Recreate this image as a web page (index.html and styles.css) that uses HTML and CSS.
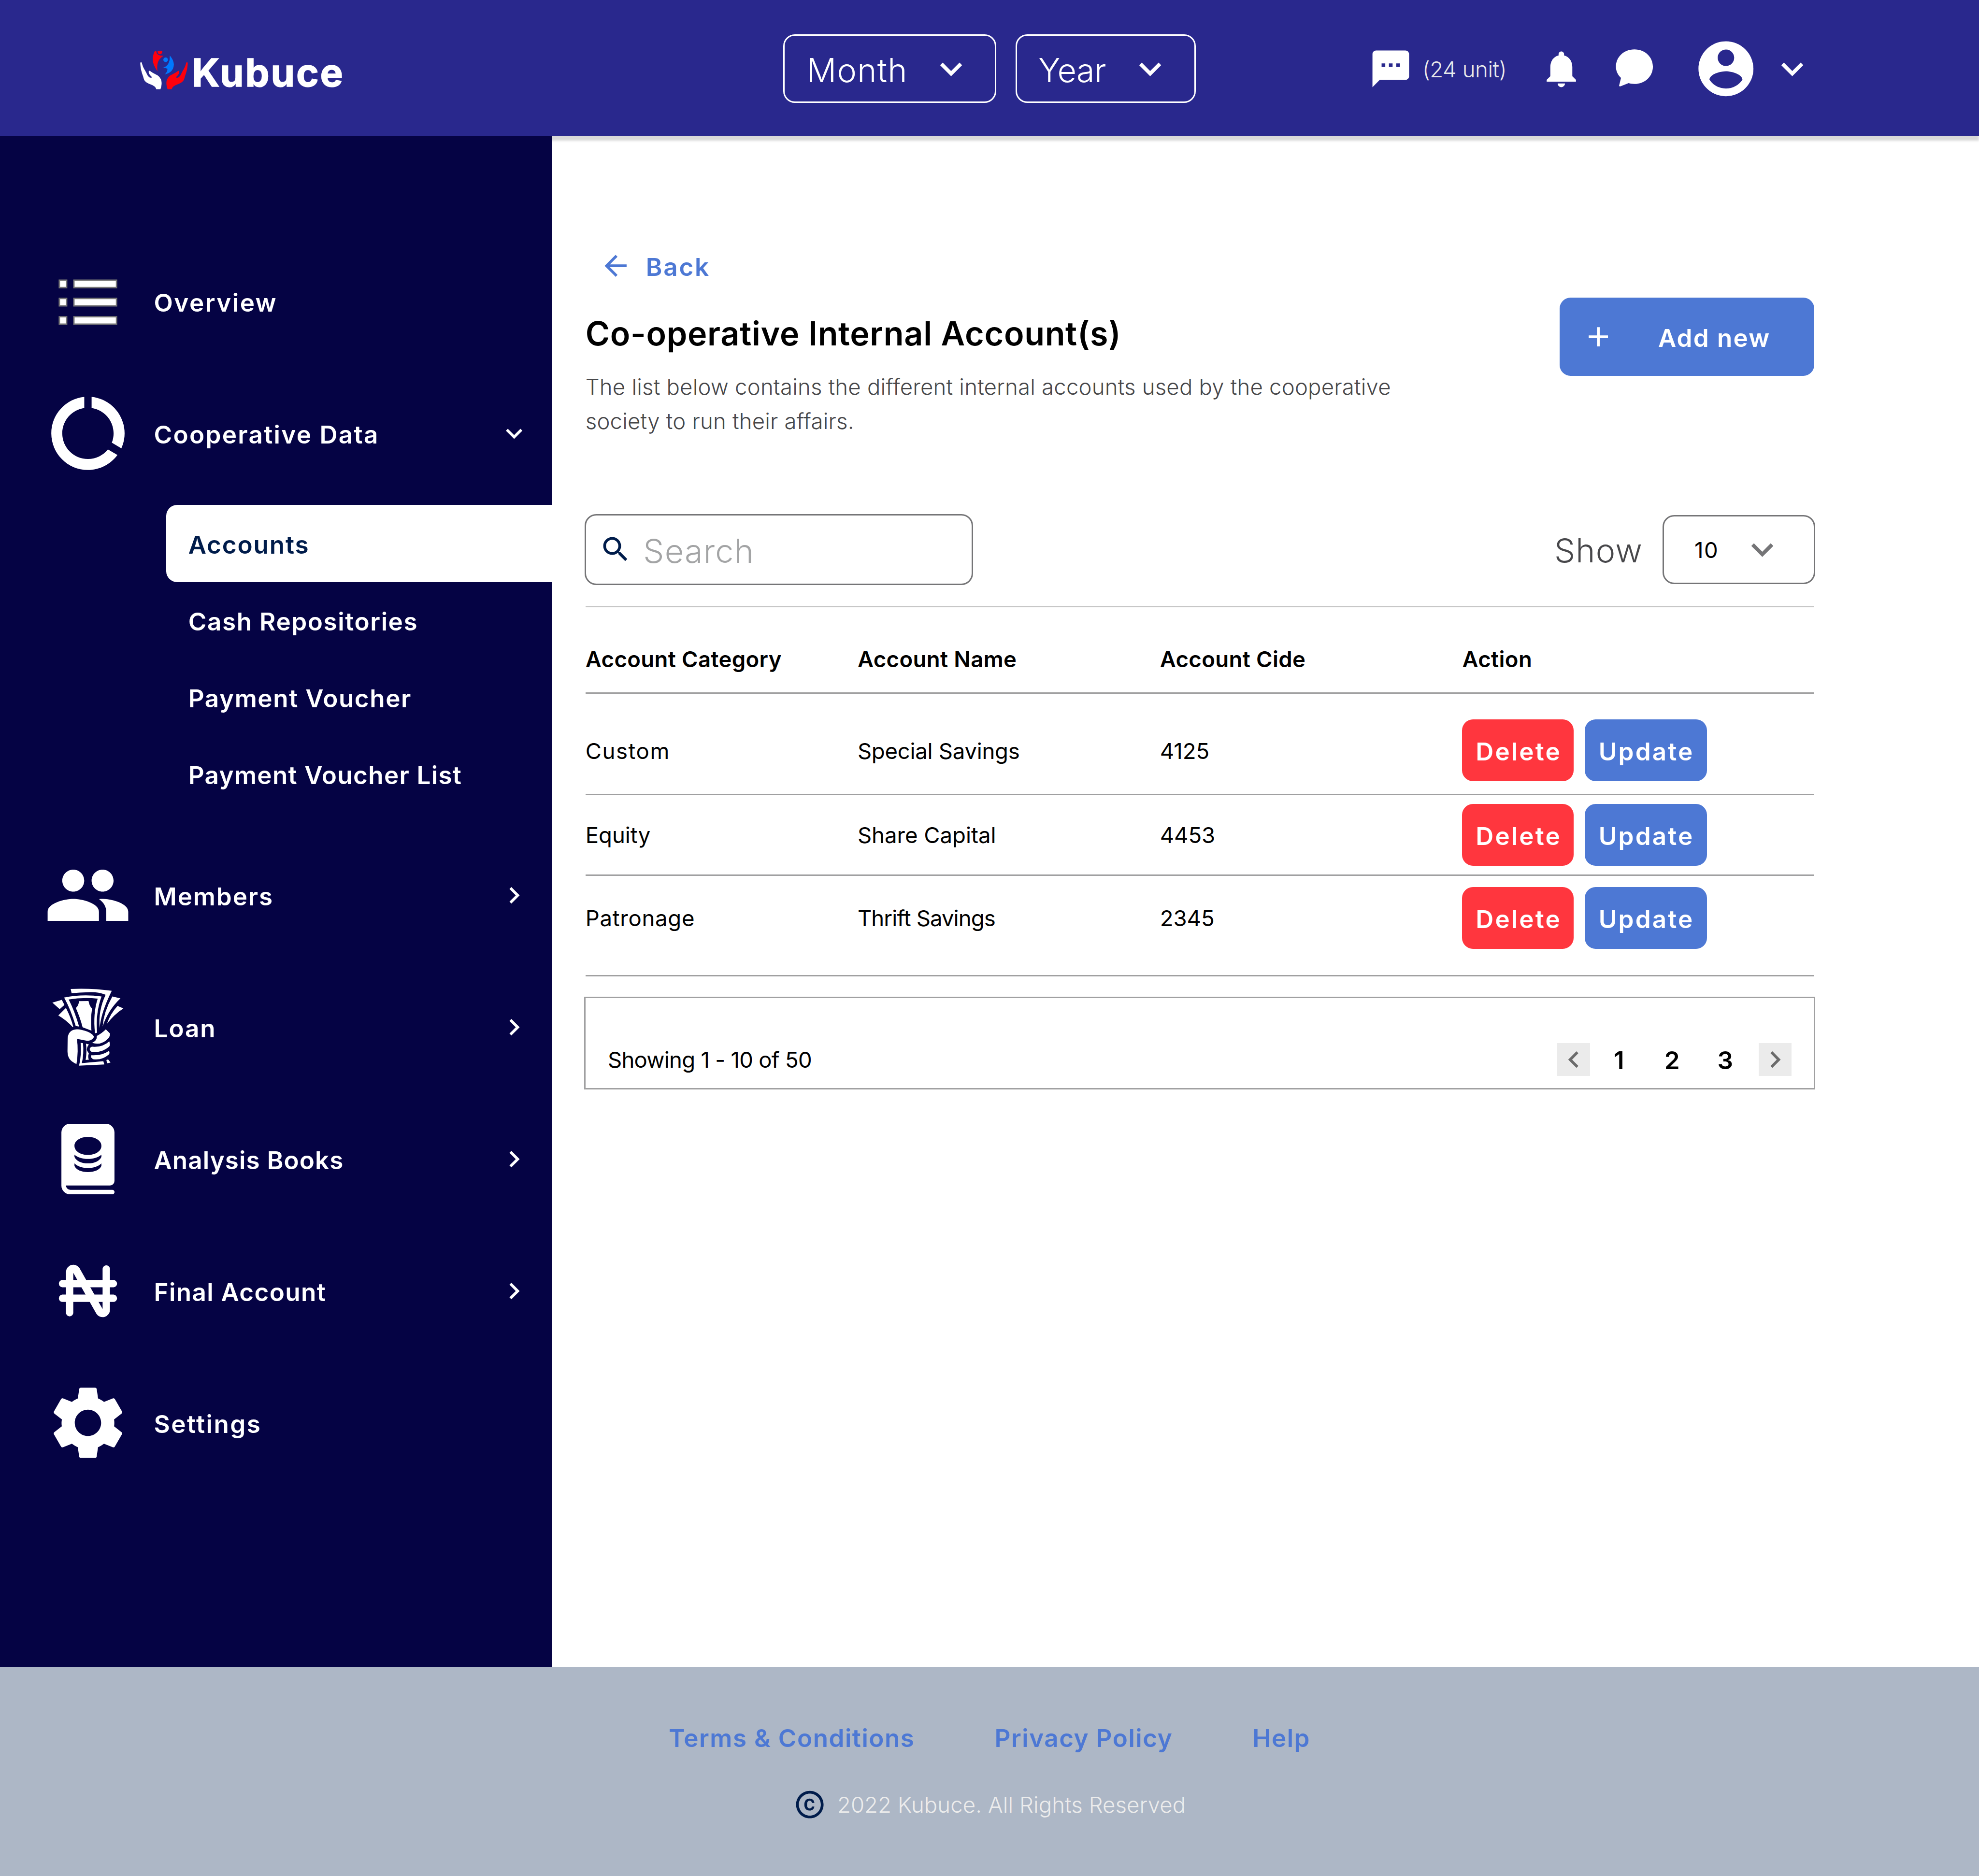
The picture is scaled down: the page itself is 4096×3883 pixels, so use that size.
FILE: index.html
```html
<!DOCTYPE html>
<html lang="en">
<head>
<meta charset="utf-8">
<title>Kubuce - Internal Accounts</title>
<link rel="stylesheet" href="styles.css">
</head>
<body>
<svg class="sprite" aria-hidden="true">
  <symbol id="i-down" viewBox="0 0 24 24"><path d="M7.41 8.59 12 13.17l4.59-4.58L18 10l-6 6-6-6z"/></symbol>
  <symbol id="i-right" viewBox="0 0 24 24"><path d="M10 6 8.59 7.41 13.17 12l-4.58 4.59L10 18l6-6z"/></symbol>
  <symbol id="i-left" viewBox="0 0 24 24"><path d="M15.41 7.41 14 6l-6 6 6 6 1.41-1.41L10.83 12z"/></symbol>
</svg>

<header class="header">
  <div class="logo">
    <svg class="logo-mark" viewBox="78 93 313 252">
      <path fill="#fff" d="M79 174C80 166 88 166 90 175C97 205 112 222 120 240C128 260 138 270 150 270C157 268 155 264 148 258C138 248 133 238 134 230C136 222 142 223 150 231C162 241 178 246 190 253C212 268 219 285 219 306C219 322 215 335 211 345H184C180 330 168 322 145 313C112 300 104 290 98 262C88 235 80 210 79 174Z"/>
      <path fill="#ff000c" transform="translate(469 0) scale(-1 1)" d="M79 174C80 166 88 166 90 175C97 205 112 222 120 240C128 260 138 270 150 270C157 268 155 264 148 258C138 248 133 238 134 230C136 222 142 223 150 231C162 241 178 246 190 253C212 268 219 285 219 306C219 322 215 335 211 345H184C180 330 168 322 145 313C112 300 104 290 98 262C88 235 80 210 79 174Z"/>
      <path fill="#ff000c" d="M176 93H184C183 115 200 127 232 126C200 146 185 170 192 228C168 192 160 170 161 145C162 122 168 105 176 93ZM193 93H223C225 108 217 116 208 116C199 116 191 108 193 93Z"/>
      <path fill="#0078ff" d="M272 124C290 145 299 165 299 185C297 225 270 242 240 248C250 238 257 226 257 212C248 206 238 204 224 206C255 197 275 175 272 124ZM230 152a15 15 0 1 0 30 0a15 15 0 1 0-30 0Z"/>
    </svg>
    <span class="wordmark">Kubuce</span>
  </div>
  <div class="select month"><span class="t">Month</span><svg class="i32"><use href="#i-down"/></svg></div>
  <div class="select year"><span class="t">Year</span><svg class="i32"><use href="#i-down"/></svg></div>
  <div class="tools">
    <svg class="i32" viewBox="0 0 24 24"><path d="M20 2H4c-1.1 0-1.99.9-1.99 2L2 22l4-4h14c1.1 0 2-.9 2-2V4c0-1.1-.9-2-2-2zM9 11H7V9h2v2zm4 0h-2V9h2v2zm4 0h-2V9h2v2z"/></svg>
    <span class="t units">(24 unit)</span>
    <svg class="i32 bell" viewBox="0 0 24 24"><path d="M12 22c1.1 0 2-.9 2-2h-4c0 1.1.89 2 2 2zm6-6v-5c0-3.07-1.64-5.64-4.5-6.32V4c0-.83-.67-1.5-1.5-1.5s-1.5.67-1.5 1.5v.68C7.63 5.36 6 7.92 6 11v5l-2 2v1h16v-1l-2-2z"/></svg>
    <svg class="i32 chat" viewBox="0 0 32 32"><path d="M17.15 1.85C24.9 1.85 30.6 7.4 30.6 14.4S24.9 27 17.15 27c-1.6 0-3-.2-4.2-.6l-6 2.3c-.6.2-1-.1-.9-.7L7.4 22.6C5 20.3 3.7 17.6 3.7 14.4 3.7 7.4 9.4 1.85 17.15 1.85z"/></svg>
    <svg class="avatar" viewBox="0 0 24 24"><path d="M12 2C6.48 2 2 6.48 2 12s4.48 10 10 10 10-4.48 10-10S17.52 2 12 2zm0 3c1.66 0 3 1.34 3 3s-1.34 3-3 3-3-1.34-3-3 1.34-3 3-3zm0 14.2c-2.5 0-4.71-1.28-6-3.22.03-1.99 4-3.08 6-3.08 1.99 0 5.97 1.09 6 3.08-1.29 1.94-3.5 3.22-6 3.22z"/></svg>
    <svg class="i32"><use href="#i-down"/></svg>
  </div>
</header>

<div class="body">
  <nav class="sidebar">
    <a class="item">
      <svg class="i64" viewBox="0 0 64 64"><g fill="#fff" stroke="#777" stroke-width="1"><path d="M11.2 16.5h5.3v5.4h-5.3zM21.8 16.5h31v5.4h-31zM11.2 29.8h5.3v5.4h-5.3zM21.8 29.8h31v5.4h-31zM11.2 43.1h5.3v5.4h-5.3zM21.8 43.1h31v5.4h-31z"/></g></svg>
      <span class="t">Overview</span>
    </a>
    <a class="item">
      <svg class="i64" viewBox="0 0 24 24"><path d="M13 2.05v3.03c3.39.49 6 3.39 6 6.92 0 .9-.18 1.75-.48 2.54l2.6 1.53c.56-1.24.88-2.62.88-4.07 0-5.18-3.95-9.45-9-9.95zM12 19c-3.87 0-7-3.13-7-7 0-3.53 2.61-6.43 6-6.92V2.05c-5.06.5-9 4.76-9 9.95 0 5.52 4.47 10 9.99 10 3.31 0 6.24-1.61 8.06-4.09l-2.6-1.53C16.17 17.98 14.21 19 12 19z"/></svg>
      <span class="t cooperative">Cooperative Data</span>
      <svg class="i24 caret"><use href="#i-down"/></svg>
    </a>
    <div class="submenu">
      <a class="sub active"><span class="t">Accounts</span></a>
      <a class="sub"><span class="t">Cash Repositories</span></a>
      <a class="sub"><span class="t">Payment Voucher</span></a>
      <a class="sub voucher-list"><span class="t">Payment Voucher List</span></a>
    </div>
    <a class="item">
      <svg class="i64" viewBox="0 0 24 24"><path d="M16 11c1.66 0 2.99-1.34 2.99-3S17.66 5 16 5c-1.66 0-3 1.34-3 3s1.34 3 3 3zm-8 0c1.66 0 2.99-1.34 2.99-3S9.66 5 8 5C6.34 5 5 6.34 5 8s1.34 3 3 3zm0 2c-2.33 0-7 1.17-7 3.5V19h14v-2.5c0-2.33-4.67-3.5-7-3.5zm8 0c-.29 0-.62.02-.97.05 1.16.84 1.97 1.97 1.97 3.45V19h6v-2.5c0-2.33-4.67-3.5-7-3.5z"/></svg>
      <span class="t members">Members</span>
      <svg class="i24 caret"><use href="#i-right"/></svg>
    </a>
    <a class="item">
      <svg class="i64" viewBox="48 864 576 576">
        <path d="M223 902Q360 896 492 914Q420 1060 413 1158Q402 1045 452 940Q400 920 340 923Q280 924 229 930Z"/>
        <path d="M180 958Q300 934 425 951Q385 1060 396 1188L382 1192Q368 1060 400 965Q300 955 210 971Q250 1050 278 1148L256 1145Q225 1040 180 958Z"/>
        <path d="M277 982L340 981Q344 1010 363 1031Q352 1100 359 1175L301 1153Q285 1090 257 1027Q277 1008 277 982Z"/>
        <path d="M103 991L165 973L182 1006L151 1034Z"/>
        <path d="M192 1026L142 1075Q200 1110 236 1152L240 1150Q225 1090 192 1026Z"/>
        <path d="M496 951L549 964Q468 1040 432 1148Q440 1050 496 951Z"/>
        <path d="M530 1013L568 1029Q505 1070 460 1131Q482 1065 530 1013Z"/>
        <path d="M262 1166C305 1166 375 1192 375 1217C365 1233 352 1243 330 1241L264 1229Q275 1310 261 1394C222 1374 204 1358 202 1310L203 1225Q208 1168 262 1166Z"/>
        <path d="M453 1166L480 1193Q482 1210 470 1225Q425 1275 363 1255Q397 1240 394 1210Q430 1190 453 1166Z"/>
        <path d="M476 1245Q484 1270 474 1280Q430 1320 362 1315Q345 1305 348 1292Q355 1278 368 1280Q430 1285 476 1245Z"/>
        <path d="M474 1307Q480 1320 474 1330Q430 1370 372 1362Q352 1355 357 1336Q430 1340 474 1307Z"/>
        <path d="M288 1255L304 1257Q310 1330 296 1388L437 1375L443 1396L278 1404Q295 1330 288 1255Z"/>
        <path d="M323 1260L342 1265Q325 1290 330 1305L342 1325Q333 1345 342 1365L321 1367Q330 1310 323 1260Z"/>
        <path d="M457 1367L468 1363L484 1384L461 1389Z"/>
      </svg>
      <span class="t members">Loan</span>
      <svg class="i24 caret"><use href="#i-right"/></svg>
    </a>
    <a class="item">
      <svg class="i64" viewBox="0 0 64 64"><path fill-rule="evenodd" d="M19 6.3H45a6.3 6.3 0 0 1 6.3 6.3V48a3.2 3.2 0 0 1-3.2 3.2H16a3.2 3.2 0 0 0 3.2 3.2H49.7a1.6 1.6 0 0 1 0 3.3H19a6.3 6.3 0 0 1-6.3-6.3V12.6A6.3 6.3 0 0 1 19 6.3zM32 15.9C26.5 15.9 22.2 18.6 22.2 22.4S26.5 29 32 29S41.8 26.2 41.8 22.4S37.5 15.9 32 15.9zM22.2 28.8V30.4C23.3 33.3 27.3 35.2 32 35.2S40.7 33.3 41.8 30.4V28.8C39.6 30.8 36 31.9 32 31.9S24.4 30.8 22.2 28.8zM22.2 35.2V37C23.3 39.8 27.3 41.5 32 41.5S40.7 39.8 41.8 37V35.2C39.6 37.4 36 38.6 32 38.6S24.4 37.4 22.2 35.2z"/></svg>
      <span class="t analysis">Analysis Books</span>
      <svg class="i24 caret"><use href="#i-right"/></svg>
    </a>
    <a class="item">
      <svg class="i64" viewBox="0 0 64 64"><path d="M16 18.4a5.33 5.33 0 0 1 9.9-2.9L42.67 45.2V15.9a2.67 2.67 0 0 1 5.33 0V45.6a5.33 5.33 0 0 1-9.9 2.9L21.33 18.8V48a2.67 2.67 0 0 1-5.33 0z"/><path d="M13.33 24H50.67a2.67 2.67 0 0 1 0 5.33H13.33a2.67 2.67 0 0 1 0-5.33zM13.33 34.67H50.67a2.67 2.67 0 0 1 0 5.33H13.33a2.67 2.67 0 0 1 0-5.33z"/></svg>
      <span class="t final">Final Account</span>
      <svg class="i24 caret"><use href="#i-right"/></svg>
    </a>
    <a class="item">
      <svg class="i64" viewBox="0 0 24 24"><path d="M19.14 12.94c.04-.3.06-.61.06-.94 0-.32-.02-.64-.07-.94l2.03-1.58c.18-.14.23-.41.12-.61l-1.92-3.32c-.12-.22-.37-.29-.59-.22l-2.39.96c-.5-.38-1.03-.7-1.62-.94l-.36-2.54c-.04-.24-.24-.41-.48-.41h-3.84c-.24 0-.43.17-.47.41l-.36 2.54c-.59.24-1.13.57-1.62.94l-2.39-.96c-.22-.08-.47 0-.59.22L2.74 8.87c-.12.21-.08.47.12.61l2.03 1.58c-.05.3-.09.63-.09.94s.02.64.07.94l-2.03 1.58c-.18.14-.23.41-.12.61l1.92 3.32c.12.22.37.29.59.22l2.39-.96c.5.38 1.03.7 1.62.94l.36 2.54c.05.24.24.41.48.41h3.84c.24 0 .44-.17.47-.41l.36-2.54c.59-.24 1.13-.56 1.62-.94l2.39.96c.22.08.47 0 .59-.22l1.92-3.32c.12-.22.07-.47-.12-.61l-2.01-1.58zM12 15.6c-1.98 0-3.6-1.62-3.6-3.6s1.62-3.6 3.6-3.6 3.6 1.62 3.6 3.6-1.62 3.6-3.6 3.6z"/></svg>
      <span class="t">Settings</span>
    </a>
  </nav>

  <main class="main">
    <a class="back">
      <svg class="i24" viewBox="0 0 24 24"><path d="M20 11H7.83l5.59-5.59L12 4l-8 8 8 8 1.41-1.41L7.83 13H20v-2z"/></svg>
      <span class="t">Back</span>
    </a>
    <div class="head">
      <div class="titles">
        <h1 class="t">Co-operative Internal Account(s)</h1>
        <p class="t">The list below contains the different internal accounts used by the cooperative society to run their affairs.</p>
      </div>
      <a class="add">
        <svg class="i24" viewBox="0 0 24 24"><path d="M19 13h-6v6h-2v-6H5v-2h6V5h2v6h6v2z"/></svg>
        <span class="t">Add new</span>
      </a>
    </div>
    <div class="toolbar">
      <div class="search">
        <svg class="i24" viewBox="0 0 24 24"><path d="M15.5 14h-.79l-.28-.27C15.41 12.59 16 11.11 16 9.5 16 5.91 13.09 3 9.5 3S3 5.91 3 9.5 5.91 16 9.5 16c1.61 0 3.09-.59 4.23-1.57l.27.28v.79l5 4.99L20.49 19l-4.99-5zm-6 0C7.01 14 5 11.99 5 9.5S7.01 5 9.5 5 14 7.01 14 9.5 11.99 14 9.5 14z"/></svg>
        <span class="t">Search</span>
      </div>
      <span class="t show">Show</span>
      <div class="count"><span class="t">10</span><svg class="i32"><use href="#i-down"/></svg></div>
    </div>

    <div class="table">
      <div class="row thead"><span class="t">Account Category</span><span class="t">Account Name</span><span class="t">Account Cide</span><span class="t">Action</span></div>
      <div class="row first"><span class="t custom">Custom</span><span class="t special">Special Savings</span><span class="t">4125</span><div class="actions"><a class="btn del"><span class="t">Delete</span></a><a class="btn upd"><span class="t">Update</span></a></div></div>
      <div class="row second"><span class="t">Equity</span><span class="t">Share Capital</span><span class="t">4453</span><div class="actions"><a class="btn del"><span class="t">Delete</span></a><a class="btn upd"><span class="t">Update</span></a></div></div>
      <div class="row third"><span class="t patronage">Patronage</span><span class="t thrift">Thrift Savings</span><span class="t">2345</span><div class="actions"><a class="btn del"><span class="t">Delete</span></a><a class="btn upd"><span class="t">Update</span></a></div></div>
    </div>

    <div class="pager">
      <span class="t showing">Showing 1 - 10 of 50</span>
      <a class="step prev"><svg class="i24"><use href="#i-left"/></svg></a>
      <span class="t page">1</span><span class="t page">2</span><span class="t page">3</span>
      <a class="step next"><svg class="i24"><use href="#i-right"/></svg></a>
    </div>
  </main>
</div>

<footer class="footer">
  <div class="links"><a class="t">Terms &amp; Conditions</a><a class="t">Privacy Policy</a><a class="t">Help</a></div>
  <div class="copy">
    <svg class="i24" viewBox="0 0 24 24"><path d="M11.88 9.14c1.28.06 1.61 1.15 1.63 1.66h1.79c-.08-1.98-1.49-3.19-3.45-3.19C9.64 7.61 8 9 8 12.14c0 1.94.93 4.24 3.84 4.24 2.22 0 3.41-1.65 3.44-2.95h-1.79c-.03.59-.45 1.38-1.63 1.44-1.31-.04-1.86-1.06-1.86-2.73 0-2.89 1.28-2.98 1.88-3zM12 2C6.48 2 2 6.48 2 12s4.48 10 10 10 10-4.48 10-10S17.52 2 12 2zm0 18c-4.41 0-8-3.59-8-8s3.59-8 8-8 8 3.59 8 8-3.59 8-8 8z"/></svg>
    <span class="t">2022 Kubuce. All Rights Reserved</span>
  </div>
</footer>
</body>
</html>
```
FILE: styles.css
```css
/* 1rem is ten layout units; the page is 144rem wide */
html { font-size: 28.4444px; }
* { box-sizing: border-box; margin: 0; padding: 0; }
body {
  width: 144rem; height: 136.5rem; overflow: hidden;
  display: flex; flex-direction: column;
  font-family: Inter, "Open Sans", "Liberation Sans", sans-serif;
  font-size: 1.6rem; line-height: 2.4rem; background: #fff; color: #000;
}
svg { display: block; fill: currentColor; flex: none; }
.sprite { position: absolute; width: 0; height: 0; }
/* optical nudge of the baseline that leaves the box height unchanged */
.t { padding-top: .036em; margin-bottom: -.036em; white-space: nowrap; display: block; }
.i24 { width: 2.4rem; height: 2.4rem; }
.i32 { width: 3.2rem; height: 3.2rem; }
.i64 { width: 6.4rem; height: 6.4rem; }

.header {
  flex: none; height: 9.9rem; padding: .1rem 0 0 10.2rem;
  display: flex; align-items: center;
  background: #29288d; color: #fff;
  box-shadow: 0 .35rem .15rem rgba(0,0,0,.15);
}
.logo { width: 46.8rem; display: flex; align-items: center; padding-top: .2rem; }
.logo-mark { width: 3.478rem; height: 2.8rem; margin-right: .3rem; }
.wordmark {
  font-size: 2.8rem; font-weight: 700; letter-spacing: .1rem; padding-top: .35rem;
  -webkit-text-stroke: .05rem #fff; stroke-linejoin: round;
}
.select {
  height: 5rem; border: 3px solid #fff; border-radius: .85rem;
  display: flex; align-items: center; justify-content: space-between;
  font-size: 2.4rem; font-weight: 300; padding-left: 1.6rem;
}
.month { width: 15.5rem; padding-right: 1.6rem; letter-spacing: .045rem; }
.year { width: 13.1rem; margin-left: 1.4rem; padding-right: 1.6rem; letter-spacing: -.025rem; padding-left: 1.55rem; }
.tools { display: flex; align-items: center; margin-left: 12.6rem; }
.units { width: 8.5rem; margin-left: .7rem; font-weight: 300; color: #e9e9ea; letter-spacing: -.015rem; }
.chat { margin-left: 2rem; }
.avatar { width: 4.8rem; height: 4.8rem; margin: 0 .8rem 0 2.8rem; }

.body { flex: none; height: 111.4rem; display: flex; }
.sidebar {
  position: relative; width: 40.2rem; padding-top: 8.85rem; background: #050344; color: #fff;
  font-size: 1.8rem; font-weight: 600; letter-spacing: .087rem;
}
.item { height: 6.4rem; margin-bottom: 3.2rem; padding: 0 1.6rem 0 3.2rem; display: flex; align-items: center; gap: 1.6rem; }
.caret { margin-left: auto; }
.cooperative { letter-spacing: .081rem; }
.members { letter-spacing: .067rem; }
.analysis { letter-spacing: .038rem; }
.final { letter-spacing: .049rem; }
.submenu { margin: -1.2rem 0 2.8rem 12.1rem; letter-spacing: .056rem; }
.sub { height: 5.6rem; padding-left: 1.6rem; display: flex; align-items: center; }
.sub.active { background: #fff; color: #001c4b; border-radius: .8rem 0 0 .8rem; letter-spacing: .067rem; }
.voucher-list { letter-spacing: .047rem; }

.main { flex: 1; padding: 8.25rem 12rem 0 2.4rem; }
.back { display: flex; align-items: center; gap: 1rem; padding-left: 1rem; color: #4d78d4; font-size: 1.8rem; font-weight: 600; letter-spacing: .097rem; }
.head { display: flex; justify-content: space-between; align-items: flex-start; margin-top: 1.1rem; height: 10.24rem; }
.titles { padding-top: 1.05rem; width: 60rem; }
h1 { font-size: 2.4rem; line-height: 3rem; font-weight: 600; letter-spacing: .025rem; }
p.t { margin-top: 1.15rem; line-height: 2.5rem; font-weight: 300; letter-spacing: .007rem; color: #47474a; white-space: normal; }
.add {
  width: 18.5rem; height: 5.7rem; border-radius: .8rem; background: #4d78d4; color: #fff;
  display: flex; align-items: center; justify-content: space-between; padding: 0 3.17rem 0 1.6rem;
  font-size: 1.8rem; font-weight: 600; letter-spacing: .078rem;
}
.toolbar { display: flex; align-items: center; height: 5.2rem; margin: 5.5rem -.09rem 1.5rem -.05rem; }
.search {
  width: 28.25rem; height: 5.2rem; border: 3px solid #757577; border-radius: .85rem;
  display: flex; align-items: center; gap: .8rem; padding-left: .95rem;
  font-size: 2.4rem; font-weight: 300; letter-spacing: .042rem; color: #a3a4a5;
}
.search svg { color: #001c4b; }
.show { margin: 0 1.45rem 0 auto; font-size: 2.4rem; font-weight: 300; letter-spacing: .045rem; color: #47474a; }
.count { width: 11.1rem; height: 5rem; border: 3px solid #757577; border-radius: .85rem; display: flex; align-items: center; justify-content: space-between; padding: 0 2.15rem 0 2.2rem; letter-spacing: .05rem; }
.count svg { color: #757577; }

.table { border-top: 3px solid #c7c7c7; }
.row { display: grid; grid-template-columns: 19.8rem 22rem 22rem 1fr; align-items: center; border-bottom: 3px solid #a0a0a1; letter-spacing: 0; }
.thead { height: 6.3rem; padding-top: 1.3rem; font-weight: 600; letter-spacing: .013rem; }
.first { height: 7.37rem; padding: .95rem 0 0; }
.second { height: 5.88rem; }
.third { height: 7.3rem; padding-bottom: 1.1rem; }
.custom { letter-spacing: .055rem; }
.special { letter-spacing: -.009rem; }
.patronage { letter-spacing: .025rem; }
.thrift { letter-spacing: -.032rem; }
.actions { display: flex; gap: .8rem; }
.btn { height: 4.5rem; padding-left: .1rem; border-radius: .8rem; color: #fff; font-size: 1.8rem; font-weight: 600; display: flex; align-items: center; justify-content: center; letter-spacing: .11rem; }
.del { width: 8.1rem; background: #ff363e; }
.upd { width: 8.9rem; background: #4d78d4; }

.pager { height: 6.75rem; margin: 1.47rem -.08rem 0; border: 3px solid #a0a0a1; display: flex; align-items: flex-end; padding: 0 1.6rem .87rem; }
.showing { margin-right: auto; letter-spacing: -.026rem; }
.step { background: #ebebeb; color: #6b6b6b; }
.page { width: 3.87rem; text-align: center; font-size: 1.8rem; font-weight: 600; }
.prev { margin-right: .15rem; }
.next { margin-left: .5rem; }

.footer { flex: none; height: 15.2rem; padding-top: 3.9rem; background: #adb7c6; display: flex; flex-direction: column; align-items: center; gap: 2.5rem; }
.links { display: flex; gap: 5.8rem; color: #4d78d4; font-size: 1.8rem; font-weight: 600; letter-spacing: .053rem; }
.copy { display: flex; align-items: center; gap: .8rem; font-weight: 300; letter-spacing: .003rem; color: #ececec; }
.copy svg { color: #001c4b; }
```
